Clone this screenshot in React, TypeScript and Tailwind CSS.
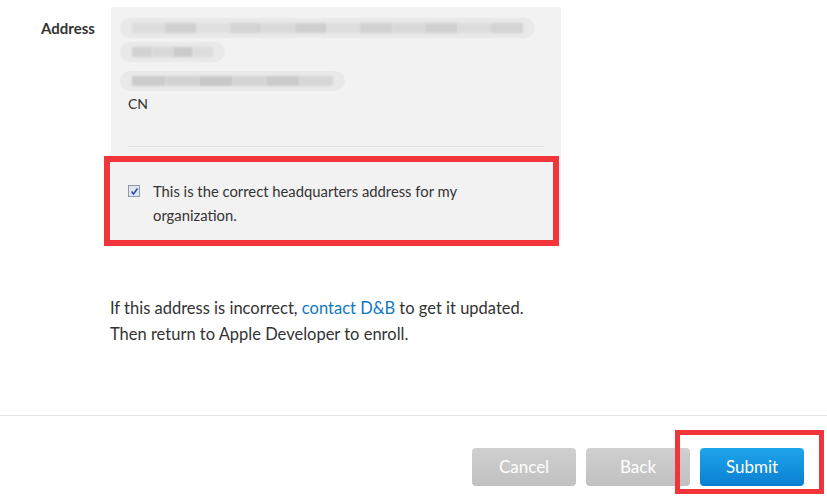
import React from "react"

const font = { fontFamily: "Lato, 'Open Sans', sans-serif" }

function BlurLine({ width, blocks }: { width: number; blocks: string[] }) {
  return (
    <div className="h-[20px] rounded-full bg-[#e9e9e9] flex items-center px-[12px] gap-0" style={{ width }}>
      {blocks.map((c, i) => (
        <div key={i} className="h-[10px] flex-1 blur-[1px]" style={{ backgroundColor: c }} />
      ))}
    </div>
  )
}

export default function App() {
  return (
    <div className="relative w-[827px] h-[499px] bg-white overflow-hidden text-[#333]" style={font}>
      <div className="flex pt-[7px]">
        <div className="w-[111px] pl-[41px] pt-[10px] text-[15px] font-bold text-[#333]">Address</div>
        <div className="w-[450px] h-[233px] bg-[#f2f2f2] pt-[11px] px-[9px]">
          <BlurLine width={415} blocks={["#dcdcdc", "#d0d0d0", "#e0e0e0", "#d4d4d4", "#dadada", "#cfcfcf", "#dedede", "#d2d2d2", "#d8d8d8", "#d0d0d0", "#dcdcdc", "#d4d4d4"]} />
          <div className="mt-[4px]">
            <BlurLine width={105} blocks={["#d2d2d2", "#d8d8d8", "#cbcbcb", "#dcdcdc"]} />
          </div>
          <div className="mt-[9px]">
            <BlurLine width={225} blocks={["#cccccc", "#d2d2d2", "#c8c8c8", "#d4d4d4", "#cbcbcb", "#d6d6d6"]} />
          </div>
          <div className="pl-[8px] mt-[3px] text-[14px] leading-[20px]">CN</div>
          <div className="mx-[8px] mt-[32px] h-px bg-[#e2e2e2]" />
          <label className="flex items-start gap-[13px] pl-[8px] mt-[32px] text-[14.8px] leading-[24px] text-[#333]">
            <span className="mt-[6px] w-[12px] h-[12px] shrink-0 border border-[#8a9bb0] bg-[#dfe6ef] flex items-center justify-center">
              <svg width="9" height="9" viewBox="0 0 9 9">
                <path d="M1.5 4.5 L3.5 7 L7.5 1.5" fill="none" stroke="#2a4fa8" strokeWidth="1.6" />
              </svg>
            </span>
            <span className="w-[330px]">This is the correct headquarters address for my organization.</span>
          </label>
        </div>
      </div>

      <p className="ml-[110px] mt-[55px] text-[16.5px] leading-[26px] text-[#333]">
        If this address is incorrect, <span className="text-[#0d79c2]">contact D&amp;B</span> to get it updated.
        <br />
        Then return to Apple Developer to enroll.
      </p>

      <div className="mt-[68px] border-t border-[#e3e3e3]" />

      <div className="flex justify-end gap-[10px] pr-[23px] mt-[32px]">
        <button className="w-[104px] h-[38px] rounded-[4px] bg-gradient-to-b from-[#cfcfcf] to-[#c1c1c1] text-white text-[17px]">Cancel</button>
        <button className="w-[104px] h-[38px] rounded-[4px] bg-gradient-to-b from-[#cfcfcf] to-[#c1c1c1] text-white text-[17px]">Back</button>
        <button className="w-[104px] h-[38px] rounded-[4px] bg-gradient-to-b from-[#1fa5ec] to-[#0a7fd0] text-white text-[17px]">Submit</button>
      </div>

      <div className="absolute left-[104px] top-[156px] w-[455px] h-[90px] border-[6px] border-[#f2353a] pointer-events-none" />
      <div className="absolute left-[675px] top-[430px] w-[149px] h-[64px] border-[5px] border-[#f2353a] pointer-events-none" />
    </div>
  )
}
